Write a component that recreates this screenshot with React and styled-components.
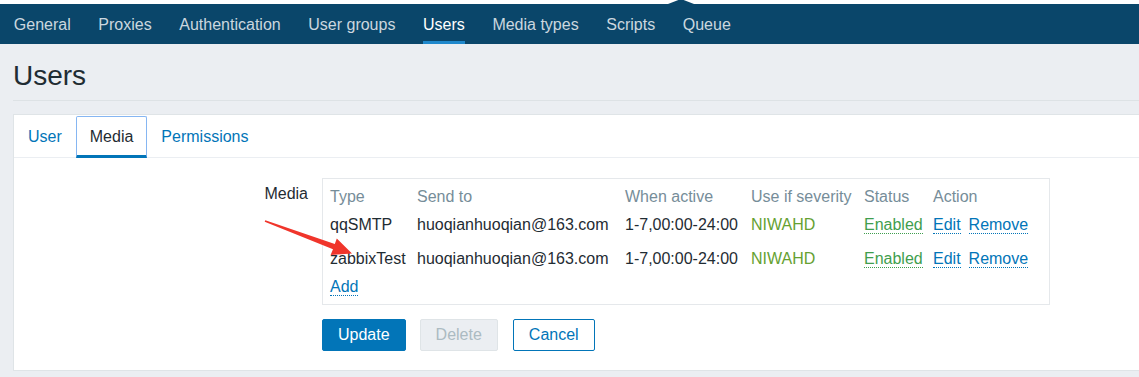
import React from "react";
import styled, { createGlobalStyle } from "styled-components";

const Global = createGlobalStyle`
  html, body { margin: 0; padding: 0; }
  body {
    background: #ebeef2;
    font-family: "Liberation Sans", Arial, sans-serif;
    font-size: 16px;
    color: #1f2c33;
    overflow: hidden;
  }
`;

const Top = styled.header`
  background: #ffffff;
  padding-top: 4px;
`;

const Nav = styled.nav`
  position: relative;
  display: flex;
  height: 40px;
  background: #0a466a;
  &::before {
    content: "";
    position: absolute;
    left: 668px;
    top: -5px;
    border-left: 13px solid transparent;
    border-right: 13px solid transparent;
    border-bottom: 5px solid #0a466a;
  }
`;

const NavItem = styled.a`
  position: relative;
  padding: 1px 13.8px 0;
  line-height: 40px;
  color: ${(p) => (p.$active ? "#ffffff" : "rgba(240,243,246,0.85)")};
  text-decoration: none;
  &::after {
    content: "";
    display: ${(p) => (p.$active ? "block" : "none")};
    position: absolute;
    left: 13.8px;
    right: 13.8px;
    bottom: 0;
    height: 3px;
    background: #1f88cc;
  }
`;

const HeaderBar = styled.div`
  display: flex;
  align-items: center;
  height: 57px;
  padding-top: 7px;
  box-sizing: border-box;
  margin-left: 13px;
  border-bottom: 1px solid #dde2e5;
`;

const Title = styled.h1`
  margin: 0;
  font-weight: normal;
  font-size: 28px;
  color: #1f2c33;
`;

const Panel = styled.section`
  position: relative;
  margin: 13px 0 0 13px;
  background: #ffffff;
  border: 1px solid #dfe4e7;
  border-right: none;
  box-sizing: border-box;
`;

const TabList = styled.div`
  display: flex;
  height: 43px;
  padding-top: 1px;
  box-sizing: border-box;
  border-bottom: 1px solid #ebeef2;
`;

const Tab = styled.a`
  position: relative;
  display: flex;
  align-items: center;
  padding: 0 14px;
  color: ${(p) => (p.$active ? "#1f2c33" : "#0275b8")};
  text-decoration: none;
  box-sizing: border-box;
  ${(p) =>
    p.$active &&
    `
    border: 1px solid #86b6f2;
    border-bottom: 3px solid #0275b8;
    border-radius: 2px 2px 0 0;
    padding: 2px 13px 0;
    margin-bottom: -1px;
  `}
`;

const FormBody = styled.div`
  padding: 20px 0 19px 0;
`;

const FormRow = styled.div`
  display: grid;
  grid-template-columns: 294px 728px;
  column-gap: 14px;
  align-items: start;
`;

const Label = styled.div`
  text-align: right;
  padding-top: 7px;
`;

const TableBox = styled.div`
  border: 1px solid #e5e8eb;
  padding: 4px 0 8px 7px;
`;

const Table = styled.table`
  border-collapse: collapse;
  table-layout: fixed;
  width: 100%;
  line-height: 18px;
`;

const Th = styled.th`
  text-align: left;
  font-weight: normal;
  color: #768d99;
  padding: 5px 0 0;
  height: 23px;
  vertical-align: top;
  white-space: nowrap;
`;

const Td = styled.td`
  padding: 5px 0 0;
  height: ${(p) => p.$h}px;
  vertical-align: top;
  white-space: nowrap;
  box-sizing: border-box;
`;

const Severity = styled.span`
  color: #66a131;
`;

const LinkBtn = styled.a`
  color: ${(p) => (p.$green ? "#3f9e4e" : "#0275b8")};
  border-bottom: 1px dotted ${(p) => (p.$green ? "#3f9e4e" : "#0275b8")};
  text-decoration: none;
  margin-right: ${(p) => (p.$gap ? 8 : 0)}px;
`;

const Buttons = styled.div`
  display: flex;
  gap: 14px;
  margin: 14px 0 0 308px;
`;

const Button = styled.button`
  height: 32px;
  padding: 0 15px;
  font-family: inherit;
  font-size: 16px;
  border-radius: 2px;
  border: 1px solid;
  cursor: pointer;
  ${(p) =>
    p.$variant === "primary"
      ? `background:#0275b8;border-color:#0275b8;color:#ffffff;`
      : p.$variant === "disabled"
      ? `background:#ebeef2;border-color:#dfe4e7;color:#acbbc2;`
      : `background:#ffffff;border-color:#0275b8;color:#0275b8;margin-left:1px;`}
`;

const ArrowSvg = styled.svg`
  position: absolute;
  left: 236px;
  top: 95px;
  pointer-events: none;
`;

const rows = [
  { type: "qqSMTP", h: 34 },
  { type: "zabbixTest", h: 28 },
];

const navItems = [
  "General",
  "Proxies",
  "Authentication",
  "User groups",
  "Users",
  "Media types",
  "Scripts",
  "Queue",
];

// arrow in page coords; svg origin sits at page (250,210)
const ARROW = [
  [265.3, 220.3],
  [334.8, 244.0],
  [336.8, 238.6],
  [352, 253.5],
  [330.6, 255.0],
  [333.0, 249.2],
  [264.7, 221.7],
]
  .map(([x, y]) => `${x - 250},${y - 210}`)
  .join(" ");

export default function App() {
  return (
    <>
      <Global />
      <Top>
        <Nav>
          {navItems.map((n) => (
            <NavItem key={n} $active={n === "Users"}>
              {n}
            </NavItem>
          ))}
        </Nav>
      </Top>
      <HeaderBar>
        <Title>Users</Title>
      </HeaderBar>
      <Panel>
        <TabList>
          <Tab>User</Tab>
          <Tab $active>Media</Tab>
          <Tab>Permissions</Tab>
        </TabList>
        <FormBody>
          <FormRow>
            <Label>Media</Label>
            <TableBox>
              <Table>
                <colgroup>
                  <col style={{ width: 87 }} />
                  <col style={{ width: 208 }} />
                  <col style={{ width: 126 }} />
                  <col style={{ width: 113 }} />
                  <col style={{ width: 69 }} />
                  <col />
                </colgroup>
                <thead>
                  <tr>
                    <Th>Type</Th>
                    <Th>Send to</Th>
                    <Th>When active</Th>
                    <Th>Use if severity</Th>
                    <Th>Status</Th>
                    <Th>Action</Th>
                  </tr>
                </thead>
                <tbody>
                  {rows.map((r) => (
                    <tr key={r.type}>
                      <Td $h={r.h}>{r.type}</Td>
                      <Td $h={r.h}>huoqianhuoqian@163.com</Td>
                      <Td $h={r.h}>1-7,00:00-24:00</Td>
                      <Td $h={r.h}>
                        <Severity>NIWAHD</Severity>
                      </Td>
                      <Td $h={r.h}>
                        <LinkBtn $green>Enabled</LinkBtn>
                      </Td>
                      <Td $h={r.h}>
                        <LinkBtn $gap>Edit</LinkBtn>
                        <LinkBtn>Remove</LinkBtn>
                      </Td>
                    </tr>
                  ))}
                  <tr>
                    <Td $h={23} colSpan={6}>
                      <LinkBtn>Add</LinkBtn>
                    </Td>
                  </tr>
                </tbody>
              </Table>
            </TableBox>
          </FormRow>
          <Buttons>
            <Button $variant="primary">Update</Button>
            <Button $variant="disabled">Delete</Button>
            <Button>Cancel</Button>
          </Buttons>
        </FormBody>
        <ArrowSvg width="120" height="60" viewBox="0 0 120 60">
          <polygon points={ARROW} fill="#f0352b" />
        </ArrowSvg>
      </Panel>
    </>
  );
}
